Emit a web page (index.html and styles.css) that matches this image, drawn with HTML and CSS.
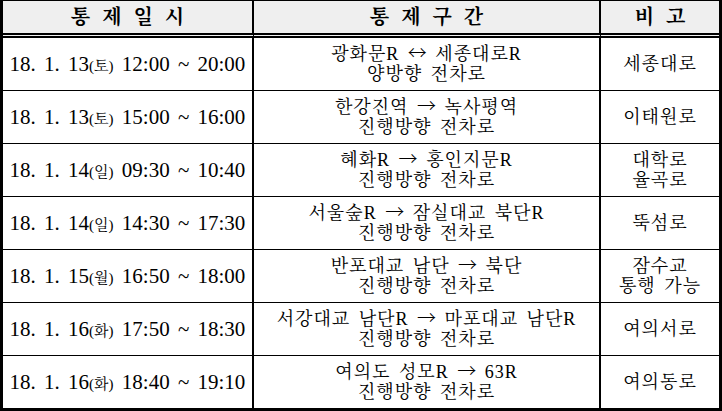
FILE: index.html
```html
<!DOCTYPE html>
<html lang="ko">
<head>
<meta charset="utf-8">
<link rel="stylesheet" href="styles.css">
</head>
<body>
<table class="tbl">
  <colgroup>
    <col class="c1"><col class="c2"><col class="c3">
  </colgroup>
  <thead>
    <tr class="head">
      <th class="cell">통 제 일 시</th>
      <th class="cell">통 제 구 간</th>
      <th class="cell last">비 고</th>
    </tr>
  </thead>
  <tbody>
    <tr class="row">
      <td class="cell date">18. 1. 13<span class="dow">(토)</span> 12:00 ~ 20:00</td>
      <td class="cell sect"><span class="ln">광화문R <span class="arr">↔</span> 세종대로R</span><span class="ln">양방향 전차로</span></td>
      <td class="cell note last">세종대로</td>
    </tr>
    <tr class="row">
      <td class="cell date">18. 1. 13<span class="dow">(토)</span> 15:00 ~ 16:00</td>
      <td class="cell sect"><span class="ln">한강진역 <span class="arr">→</span> 녹사평역</span><span class="ln">진행방향 전차로</span></td>
      <td class="cell note last">이태원로</td>
    </tr>
    <tr class="row">
      <td class="cell date">18. 1. 14<span class="dow">(일)</span> 09:30 ~ 10:40</td>
      <td class="cell sect"><span class="ln">혜화R <span class="arr">→</span> 홍인지문R</span><span class="ln">진행방향 전차로</span></td>
      <td class="cell note last"><span class="ln">대학로</span><span class="ln">율곡로</span></td>
    </tr>
    <tr class="row">
      <td class="cell date">18. 1. 14<span class="dow">(일)</span> 14:30 ~ 17:30</td>
      <td class="cell sect"><span class="ln">서울숲R <span class="arr">→</span> 잠실대교 북단R</span><span class="ln">진행방향 전차로</span></td>
      <td class="cell note last">뚝섬로</td>
    </tr>
    <tr class="row">
      <td class="cell date">18. 1. 15<span class="dow">(월)</span> 16:50 ~ 18:00</td>
      <td class="cell sect"><span class="ln">반포대교 남단 <span class="arr">→</span> 북단</span><span class="ln">진행방향 전차로</span></td>
      <td class="cell note last"><span class="ln">잠수교</span><span class="ln">통행 가능</span></td>
    </tr>
    <tr class="row">
      <td class="cell date">18. 1. 16<span class="dow">(화)</span> 17:50 ~ 18:30</td>
      <td class="cell sect"><span class="ln">서강대교 남단R <span class="arr">→</span> 마포대교 남단R</span><span class="ln">진행방향 전차로</span></td>
      <td class="cell note last">여의서로</td>
    </tr>
    <tr class="row end">
      <td class="cell date">18. 1. 16<span class="dow">(화)</span> 18:40 ~ 19:10</td>
      <td class="cell sect"><span class="ln">여의도 성모R <span class="arr">→</span> 63R</span><span class="ln">진행방향 전차로</span></td>
      <td class="cell note last">여의동로</td>
    </tr>
  </tbody>
</table>
</body>
</html>
```

FILE: styles.css
```css
html, body {
  margin: 0;
  padding: 0;
  background: #ffffff;
}

.tbl {
  border-collapse: separate;
  border-spacing: 0;
  width: 722px;
  table-layout: fixed;
  border-style: solid;
  border-color: #000;
  border-width: 1px 3px 3px 3px;
  font-family: "Liberation Serif", "Noto Serif CJK KR", "Noto Sans CJK KR", serif;
  color: #000;
}

.c1 { width: 251px; }
.c2 { width: 347px; }
.c3 { width: 118px; }

.cell {
  padding: 0;
  text-align: center;
  vertical-align: middle;
  border-right: 2px solid #000;
  border-bottom: 1px solid #000;
}

.cell.last {
  border-right: none;
}

.head .cell {
  height: 32px;
  background: #efefef;
  border-bottom: 5px double #000;
  font-weight: bold;
  font-size: 20px;
  word-spacing: 7px;
  line-height: 32px;
}

.row .cell {
  height: 52px;
}

.row .cell.sect {
  height: 50px;
  padding-bottom: 2px;
}

.row.end .cell {
  border-bottom: none;
}

.date {
  font-size: 21px;
  white-space: nowrap;
  word-spacing: 3px;
}

.dow {
  font-size: 15px;
}

.sect, .note {
  font-size: 18px;
  line-height: 20px;
  letter-spacing: 1px;
  word-spacing: 3px;
}

.ln {
  display: block;
  white-space: nowrap;
}

.arr {
  font-family: "Noto Sans CJK KR", sans-serif;
  font-size: 19px;
  line-height: 20px;
  font-weight: 300;
  letter-spacing: 0;
  word-spacing: 0;
}
```
